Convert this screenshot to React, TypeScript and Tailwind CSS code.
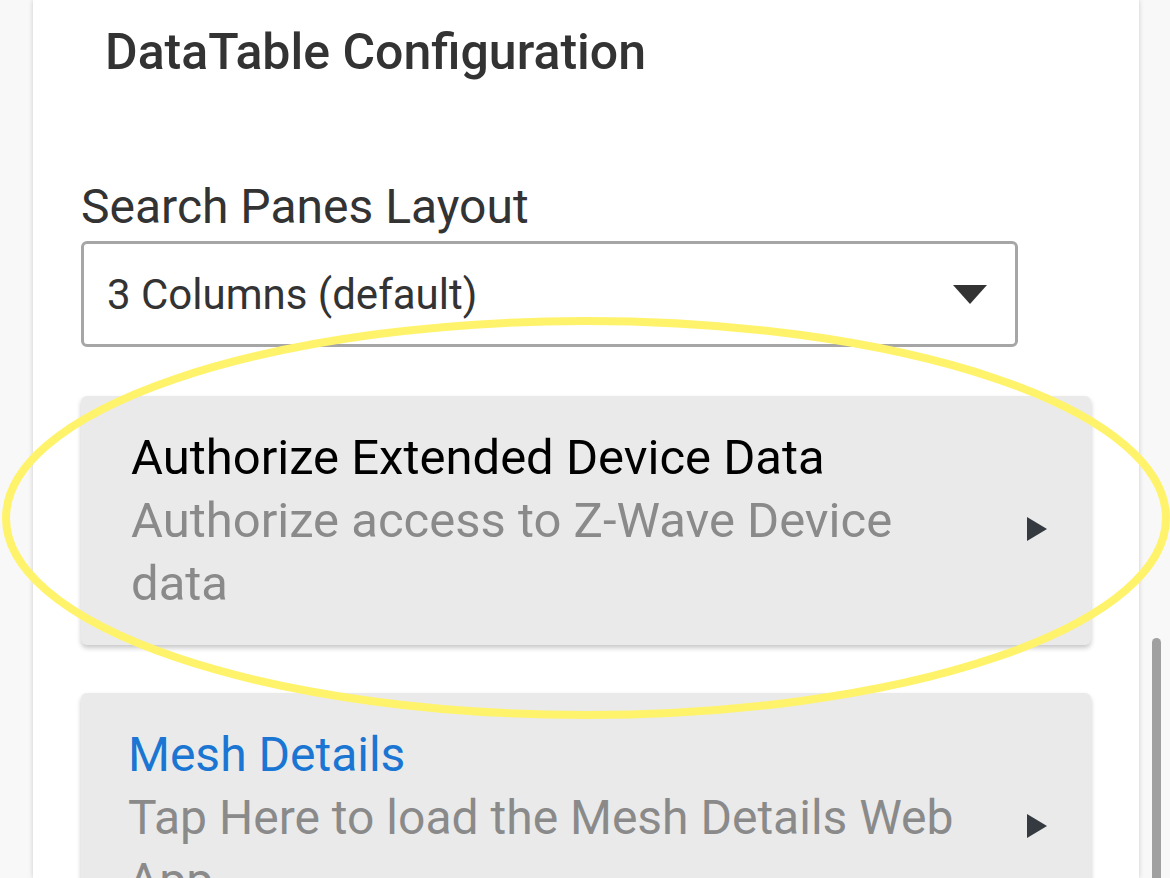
function NavCard({ title, subtitle, titleClass, bodyClass }: { title: string; subtitle: string; titleClass: string; bodyClass: string }) {
  return (
    <div className="flex items-center rounded-[6px] bg-[#eaeaea] pr-[43px] py-[30px] shadow-[0_3px_5px_rgba(0,0,0,0.22)]">
      <div className={bodyClass}>
        <div className={titleClass}>{title}</div>
        <div className="text-[#8a8a8a]">{subtitle}</div>
      </div>
      <svg width="22" height="26" viewBox="0 0 22 26" className="shrink-0 mt-[16px]">
        <path d="M1 1 L21 13 L1 25 Z" fill="#343a40" />
      </svg>
    </div>
  )
}

export default function App() {
  return (
    <div className="relative w-[1170px] h-[878px] overflow-hidden bg-[#f8f8f8] font-['Roboto',sans-serif]">
      <div className="ml-[33px] w-[1106px] h-full bg-white shadow-[0_0_5px_rgba(0,0,0,0.18)] pl-[48px] pr-[48px]">
        <h2 className="pl-[24px] pt-[20px] text-[50px] leading-[64px] font-medium text-[#333]">DataTable Configuration</h2>
        <div className="mt-[95px] text-[48px] leading-[56px] text-[#333]">Search Panes Layout</div>
        <div className="mt-[6px] flex items-center h-[106px] w-[937px] rounded-[6px] border-[3px] border-[#a6a6a6] pl-[23px] pr-[28px]">
          <span className="flex-1 text-[42px] text-[#333]">3 Columns (default)</span>
          <svg width="34" height="19" viewBox="0 0 34 19">
            <path d="M0 0 L34 0 L17 19 Z" fill="#333" />
          </svg>
        </div>
        <div className="mt-[49px] w-[1010px] flex flex-col gap-[48px]">
          <NavCard
            title="Authorize Extended Device Data"
            subtitle="Authorize access to Z-Wave Device data"
            titleClass="text-black"
            bodyClass="flex-1 ml-[50px] mr-[37px] text-[49px] leading-[63px]"
          />
          <NavCard
            title="Mesh Details"
            subtitle="Tap Here to load the Mesh Details Web App"
            titleClass="text-[#1a76d2]"
            bodyClass="flex-1 ml-[47px] mr-[40px] text-[48px] leading-[63px]"
          />
        </div>
      </div>
      <div className="absolute left-[1152px] top-[638px] w-[9px] h-[260px] rounded-full bg-[#a0a0a0]" />
      <svg className="absolute left-0 top-0 pointer-events-none" width="1170" height="878">
        <ellipse cx="586" cy="518" rx="580" ry="197" fill="none" stroke="#fff36b" strokeWidth="8" />
      </svg>
    </div>
  )
}
